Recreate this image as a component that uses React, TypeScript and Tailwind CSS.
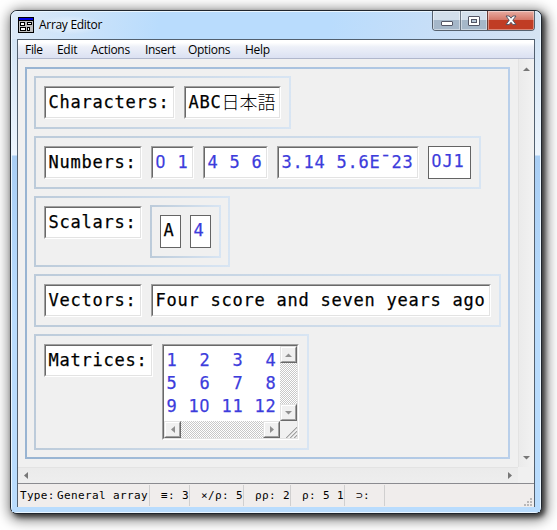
import React from "react";

const mono = "font-['DejaVu_Sans_Mono','Noto_Sans_CJK_JP',monospace]";

// Monospaced text at an 11px pitch, with an undotted zero.
function Mono({ text }: { text: string }) {
  return (
    <span className="whitespace-pre">
      {text.split(/(0|[\u3000-\u9fff]+)/).map((part, i) => {
        if (part === "0")
          return (
            <span key={i} className="inline-block w-[11px] font-['Roboto',sans-serif] text-[17.5px] leading-none tracking-normal">
              0
            </span>
          );
        if (/[\u3000-\u9fff]/.test(part))
          return (
            <span key={i} className="relative top-px font-['Noto_Sans_CJK_JP',sans-serif] text-[18px] leading-none font-light tracking-normal [-webkit-text-stroke:0px]">
              {part}
            </span>
          );
        return <span key={i}>{part}</span>;
      })}
    </span>
  );
}

function Sunken({ className = "", children }: { className?: string; children: React.ReactNode }) {
  return (
    <div className={`shrink-0 border border-t-[#a0a0a0] border-r-white border-b-white border-l-[#a0a0a0] ${className}`}>
      <div className="h-full border border-t-[#696969] border-r-[#e3e3e3] border-b-[#e3e3e3] border-l-[#696969] bg-white">
        {children}
      </div>
    </div>
  );
}

function Field({ text, width, blue }: { text: string; width: string; blue?: boolean }) {
  return (
    <Sunken className={`h-[33px] ${width}`}>
      <div className={`pl-[2.5px] leading-[29px] ${blue ? "text-[#3c3cdc]" : "text-black"}`}>
        <Mono text={text} />
      </div>
    </Sunken>
  );
}

function Scalar({ text, width, blue }: { text: string; width: string; blue?: boolean }) {
  return (
    <div className={`h-[33px] shrink-0 border border-[#646464] bg-white pl-[2.5px] leading-[29px] ${width} ${blue ? "text-[#3c3cdc]" : "text-black"}`}>
      <Mono text={text} />
    </div>
  );
}

function Group({ className = "", children }: { className?: string; children: React.ReactNode }) {
  return (
    <div className={`w-fit bg-linear-to-r from-[#bccbda] to-[#d8e5f3] p-[2px] ${className}`}>
      <div className="flex items-start gap-[9px] bg-[#f0f0f0] p-[8px]">{children}</div>
    </div>
  );
}

function Arrow({ dir, color }: { dir: "up" | "down" | "left" | "right"; color: string }) {
  const d = {
    up: "M3.5 0.5L7 4H0z",
    down: "M0 0H7L3.5 3.5z",
    left: "M0 3.5L4 0V7z",
    right: "M4 3.5L0 0V7z",
  }[dir];
  const vertical = dir === "up" || dir === "down";
  return (
    <svg width={vertical ? 7 : 4} height={vertical ? 4 : 7} className="block">
      <path d={d} fill={color} />
    </svg>
  );
}

function ClassicButton({ dir }: { dir: "up" | "down" | "left" | "right" }) {
  return (
    <div className="h-[17px] w-[17px] shrink-0 border border-t-[#e3e3e3] border-r-[#696969] border-b-[#696969] border-l-[#e3e3e3]">
      <div className="flex h-full items-center justify-center border border-t-white border-r-[#a0a0a0] border-b-[#a0a0a0] border-l-white bg-[#f0f0f0]">
        <Arrow dir={dir} color="#909090" />
      </div>
    </div>
  );
}

const dither = "bg-[repeating-conic-gradient(#c8c8c8_0_25%,#fff_0_50%)] bg-size-[2px_2px]";

function Matrix() {
  return (
    <Sunken className="h-[96px] w-[137px]">
      <div className="flex h-[75px]">
        <div className="w-[116px] pt-[3px] pl-[2.5px] text-[#3c3cdc]">
          {["1  2  3  4", "5  6  7  8", "9 10 11 12"].map((r) => (
            <div key={r} className="h-[23px] leading-[23px]">
              <Mono text={r} />
            </div>
          ))}
        </div>
        <div className={`flex w-[17px] flex-col justify-between ${dither}`}>
          <ClassicButton dir="up" />
          <ClassicButton dir="down" />
        </div>
      </div>
      <div className="flex h-[17px]">
        <div className={`flex w-[116px] justify-between ${dither}`}>
          <ClassicButton dir="left" />
          <ClassicButton dir="right" />
        </div>
        <div className="h-[17px] w-[17px] bg-[#f0f0f0]">
          <svg width="17" height="17" className="block">
            <path d="M6 17L17 6M10 17L17 10M14 17L17 14" stroke="#a0a0a0" strokeWidth="1.4" />
            <path d="M5 17L17 5M9 17L17 9M13 17L17 13" stroke="#fff" strokeWidth="0.6" />
          </svg>
        </div>
      </div>
    </Sunken>
  );
}

function AppIcon() {
  return (
    <svg width="16" height="16" className="block shrink-0" shapeRendering="crispEdges">
      <rect width="16" height="16" fill="#000" />
      <rect x="1" y="1" width="14" height="2" fill="#0000e0" />
      <rect x="1" y="4" width="14" height="11" fill="#c0c0c0" />
      <g fill="#fff" stroke="#000">
        <rect x="2.5" y="5.5" width="4" height="3" />
        <rect x="9.5" y="5.5" width="4" height="2" />
        <rect x="2.5" y="10.5" width="5" height="3" />
        <rect x="9.5" y="10.5" width="2" height="3" />
      </g>
    </svg>
  );
}

const menu = [
  ["File", "w-[32px]"],
  ["Edit", "w-[34px]"],
  ["Actions", "w-[54px]"],
  ["Insert", "w-[43px]"],
  ["Options", "w-[57px]"],
  ["Help", "w-[40px]"],
];

const cells = [
  ["≡: 3", "w-[40px] pl-[11px]"],
  ["×/ρ: 5", "w-[54px] pl-[11px]"],
  ["ρρ: 2", "w-[47px] pl-[11px]"],
  ["ρ: 5 1", "w-[54px] pl-[11px]"],
  ["⊃:", "w-[40px] pl-[11px]"],
];

function CaptionButtons() {
  return (
    <div className="flex h-[20px] w-[103px] overflow-hidden rounded-b-[4px] border border-t-0 border-[#56616e]">
      <div className="flex w-[28px] items-end justify-center border-r border-[#6c7886] bg-linear-to-b from-[#d3dfeb] from-45% to-[#a5b7c9] to-50% pb-[4px] shadow-[inset_0_0_0_1px_#ffffff70]">
        <div className="h-[5px] w-[12px] rounded-[1px] border border-[#535666] bg-white" />
      </div>
      <div className="flex w-[27px] items-center justify-center border-r border-[#6c3c36] bg-linear-to-b from-[#d3dfeb] from-45% to-[#a5b7c9] to-50% shadow-[inset_0_0_0_1px_#ffffff70]">
        <div className="flex h-[10px] w-[12px] items-center justify-center rounded-[1px] border border-[#535666] bg-white">
          <div className="h-[4px] w-[6px] border border-[#535666] bg-[#b5c5d5]" />
        </div>
      </div>
      <div className="flex flex-1 items-center justify-center bg-linear-to-b from-[#e8aca2] via-[#d5796a] via-45% to-[#c03c24] to-50% shadow-[inset_0_0_0_1px_#ffffff60]">
        <svg width="12" height="11" className="block">
          <path d="M1 1H4.2L6 3.2L7.8 1H11L7.8 5.2L11 9.6H7.8L6 7.3L4.2 9.6H1L4.2 5.2z" fill="#fff" stroke="#535666" strokeLinejoin="round" />
        </svg>
      </div>
    </div>
  );
}

export default function App() {
  return (
    <div className="h-[530px] w-[557px] overflow-hidden bg-white pt-[10px] pl-[10px]">
      <div className="h-[504px] w-[532px] rounded-[7px] border border-[#20262e] bg-[#bbdcfd] shadow-[3px_3px_5px_#000000a0,2px_3px_13px_3px_#00000088]">
        <div className="flex h-full flex-col rounded-[6px] border border-[#eaf6ff] bg-[linear-gradient(100deg,#dce9f7_0%,#b9dcfd_28%,#b9dcfd_60%,#cbdff6_85%,#d5e3f2_100%)] bg-size-[100%_28px] bg-no-repeat">
          <div className="flex h-[27px] shrink-0 justify-between pl-[6px]">
            <div className="flex items-center pb-px">
              <AppIcon />
              <span className="ml-[5px] bg-[radial-gradient(ellipse,#ffffff90,transparent_75%)] font-['Open_Sans','Noto_Sans',sans-serif] text-[12px] leading-[18px] tracking-[-0.3px] text-black">
                Array Editor
              </span>
            </div>
            <div className="-mt-px mr-[5px]">
              <CaptionButtons />
            </div>
          </div>
          <div className="flex flex-1 bg-[linear-gradient(#d3e4f5_0,#edf5fd_116px,#a9cef4_117px,#b9dcfd_280px)] px-[5px] pb-[5px]">
            <div className="flex h-[468px] w-[518px] flex-col border border-[#52606f] bg-[#f0f0f0]">
              <div className="flex h-[19px] shrink-0 border-b border-[#b0b7cc] bg-linear-to-b from-white from-15% via-[#edf0f8] via-38% to-[#dbe1f2] pl-[7px] font-['Open_Sans','Noto_Sans',sans-serif] text-[12px] leading-[19px] tracking-[-0.3px] text-black">
                {menu.map(([label, w]) => (
                  <div key={label} className={`shrink-0 ${w}`}>{label}</div>
                ))}
              </div>
              <div className="flex h-[408px] shrink-0">
                <div className={`w-[500px] pt-[8px] pl-[7px] text-[17px] tracking-[0.766px] [-webkit-text-stroke:0.25px] ${mono}`}>
                  <div className="h-[392px] w-[485px] bg-linear-to-r from-[#98b4d2] to-[#b9cfea] p-[2px]">
                    <div className="flex h-full flex-col gap-[7px] bg-[#f0f0f0] p-[7px]">
                      <Group>
                        <Field text="Characters:" width="w-[131px]" />
                        <Field text="ABC日本語" width="w-[97px]" />
                      </Group>
                      <Group>
                        <Field text="Numbers:" width="w-[98px]" />
                        <Field text="0 1" width="w-[43px]" blue />
                        <Field text="4 5 6" width="w-[65px]" blue />
                        <Field text="3.14 5.6E¯23" width="w-[142px]" blue />
                        <Scalar text="0J1" width="w-[43px]" blue />
                      </Group>
                      <Group>
                        <Field text="Scalars:" width="w-[98px]" />
                        <Group className="-m-px">
                          <Scalar text="A" width="w-[21px]" />
                          <Scalar text="4" width="w-[21px]" blue />
                        </Group>
                      </Group>
                      <Group>
                        <Field text="Vectors:" width="w-[98px]" />
                        <Field text="Four score and seven years ago" width="w-[340px]" />
                      </Group>
                      <Group>
                        <Field text="Matrices:" width="w-[109px]" />
                        <Matrix />
                      </Group>
                    </div>
                  </div>
                </div>
                <div className="flex w-[16px] flex-col items-center justify-between border-l border-[#e3e3e3] bg-linear-to-r from-[#ebebeb] to-[#f2f2f2] pt-[8px] pb-[7px]">
                  <Arrow dir="up" color="#777" />
                  <Arrow dir="down" color="#777" />
                </div>
              </div>
              <div className="flex h-[16px] w-[500px] shrink-0 items-center justify-between border-t border-[#e3e3e3] bg-linear-to-b from-[#ebebeb] to-[#eeeeee] px-[6px]">
                <Arrow dir="left" color="#777" />
                <Arrow dir="right" color="#777" />
              </div>
              <div className={`flex flex-1 border-t border-[#8b8b90] bg-[#f0edec] py-px text-[11px] leading-[21px] tracking-[0.378px] whitespace-pre text-black ${mono}`}>
                <div className="flex w-[132px] shrink-0 border-r border-[#d0cfcf] pl-[2px]">
                  <span className="w-[37px] shrink-0 tracking-[0.3px]">Type:</span>
                  <span>General array</span>
                </div>
                {cells.map(([label, w]) => (
                  <div key={label} className={`border-r border-[#d0cfcf] ${w}`}>{label}</div>
                ))}
                <div className="flex flex-1 items-end justify-end pr-[2px]">
                  <svg width="8" height="8" className="block" fill="#bab8b8">
                    <path d="M6 0h2v2h-2zM3 3h2v2h-2zM6 3h2v2h-2zM0 6h2v2h-2zM3 6h2v2h-2zM6 6h2v2h-2z" />
                  </svg>
                </div>
              </div>
            </div>
          </div>
        </div>
      </div>
    </div>
  );
}
